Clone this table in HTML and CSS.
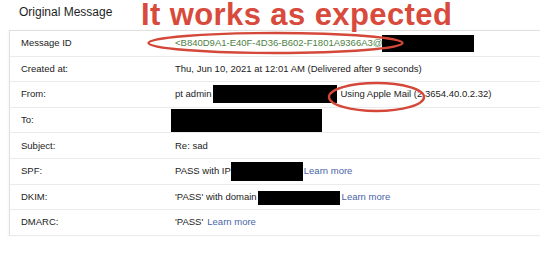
FILE: index.html
```html
<!DOCTYPE html>
<html>
<head>
<meta charset="utf-8">
<link rel="stylesheet" href="styles.css">
</head>
<body>
<div class="page">
  <header class="head"><h1 class="title">Original Message</h1></header>
  <div class="meta">
    <div class="row">
      <div class="label">Message ID</div>
      <div class="value"><span class="msgid">&lt;B840D9A1-E40F-4D36-B602-F1801A9366A3@</span><span class="redact r-id"></span></div>
    </div>
    <div class="row">
      <div class="label">Created at:</div>
      <div class="value"><span>Thu, Jun 10, 2021 at 12:01 AM (Delivered after 9 seconds)</span></div>
    </div>
    <div class="row">
      <div class="label">From:</div>
      <div class="value"><span>pt admin</span><span class="redact r-from"></span><span class="after-from">Using Apple Mail (2.3654.40.0.2.32)</span></div>
    </div>
    <div class="row">
      <div class="label">To:</div>
      <div class="value"><span class="redact r-to"></span></div>
    </div>
    <div class="row">
      <div class="label">Subject:</div>
      <div class="value"><span>Re: sad</span></div>
    </div>
    <div class="row">
      <div class="label">SPF:</div>
      <div class="value"><span>PASS with IP</span><span class="redact r-spf"></span><a class="link l-spf" href="#">Learn more</a></div>
    </div>
    <div class="row">
      <div class="label">DKIM:</div>
      <div class="value"><span>'PASS' with domain</span><span class="redact r-dkim"></span><a class="link l-dkim" href="#">Learn more</a></div>
    </div>
    <div class="row">
      <div class="label">DMARC:</div>
      <div class="value"><span>'PASS'</span><a class="link l-dmarc" href="#">Learn more</a></div>
    </div>
  </div>
  <div class="callout">It works as expected</div>
  <svg class="marks" width="540" height="257" viewBox="0 0 540 257">
    <ellipse cx="275.5" cy="43" rx="127" ry="10" fill="none" stroke="#d4483a" stroke-width="2.4"/>
    <ellipse cx="376.5" cy="97" rx="47.5" ry="14" fill="none" stroke="#d4483a" stroke-width="2.4"/>
  </svg>
</div>
</body>
</html>
```
FILE: styles.css
```css
html, body {
  margin: 0;
  padding: 0;
  background: #fff;
}
body {
  width: 540px;
  height: 257px;
  overflow: hidden;
  font-family: "Liberation Sans", Arial, sans-serif;
  color: #222;
}
.page {
  position: relative;
  width: 540px;
  height: 257px;
}
.head {
  height: 30px;
  padding-left: 19px;
  box-sizing: border-box;
  padding-top: 4px;
}
.title {
  margin: 0;
  font-size: 12px;
  font-weight: normal;
  line-height: 16px;
  color: #1e1e1e;
}
.meta {
  margin-left: 9px;
  border-left: 1px solid #e0e0e0;
  border-top: 1px solid #e0e0e0;
  box-shadow: -1px 0 2px rgba(0,0,0,0.04);
}
.row {
  display: grid;
  grid-template-columns: 165px 1fr;
  height: 24.6px;
  border-bottom: 1px solid #ebebeb;
  align-items: center;
  font-size: 9.5px;
  line-height: 12px;
}
.label {
  padding-left: 11px;
}
.value {
  display: flex;
  align-items: center;
  height: 100%;
  white-space: nowrap;
}
.msgid {
  color: #4e7f45;
}
.redact {
  display: inline-block;
  background: #000;
}
.r-id { width: 92px; height: 17px; }
.r-from { width: 124px; height: 18px; margin-left: 2px; }
.after-from { margin-left: 3px; }
.r-to { width: 151px; height: 23px; margin-left: -4px; }
.r-spf { width: 72px; height: 19px; margin-left: 0; }
.r-dkim { width: 82px; height: 14px; margin-left: 1px; margin-top: 3px; }
.link {
  color: #4a64a8;
  text-decoration: none;
}
.l-spf { margin-left: 1px; }
.l-dkim { margin-left: 2px; }
.l-dmarc { margin-left: 4px; }
.callout {
  position: absolute;
  left: 141px;
  top: 0;
  font-size: 31px;
  line-height: 30px;
  font-weight: bold;
  letter-spacing: 0.4px;
  color: #d84a3b;
  white-space: nowrap;
}
.marks {
  position: absolute;
  left: 0;
  top: 0;
  pointer-events: none;
}
```
